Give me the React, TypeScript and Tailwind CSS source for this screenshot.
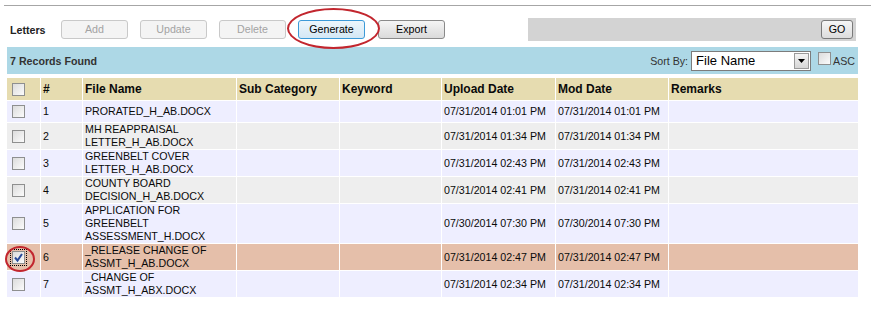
import React from "react";

type Row = {
  n: number;
  name: string[];
  upload: string;
  mod: string;
};

const rows: Row[] = [
  { n: 1, name: ["PRORATED_H_AB.DOCX"], upload: "07/31/2014 01:01 PM", mod: "07/31/2014 01:01 PM" },
  { n: 2, name: ["MH REAPPRAISAL", "LETTER_H_AB.DOCX"], upload: "07/31/2014 01:34 PM", mod: "07/31/2014 01:34 PM" },
  { n: 3, name: ["GREENBELT COVER", "LETTER_H_AB.DOCX"], upload: "07/31/2014 02:43 PM", mod: "07/31/2014 02:43 PM" },
  { n: 4, name: ["COUNTY BOARD", "DECISION_H_AB.DOCX"], upload: "07/31/2014 02:41 PM", mod: "07/31/2014 02:41 PM" },
  { n: 5, name: ["APPLICATION FOR", "GREENBELT", "ASSESSMENT_H.DOCX"], upload: "07/30/2014 07:30 PM", mod: "07/30/2014 07:30 PM" },
  { n: 6, name: ["_RELEASE CHANGE OF", "ASSMT_H_AB.DOCX"], upload: "07/31/2014 02:47 PM", mod: "07/31/2014 02:47 PM" },
  { n: 7, name: ["_CHANGE OF", "ASSMT_H_ABX.DOCX"], upload: "07/31/2014 02:34 PM", mod: "07/31/2014 02:34 PM" },
];

const SELECTED = 6;

function Box({ checked = false }: { checked?: boolean }) {
  const box = (
    <span className="relative block h-[13px] w-[13px] border border-[#8e8f8f] bg-gradient-to-br from-[#dcdcdc] to-[#fbfbfb]">
      {checked && (
        <svg viewBox="0 0 11 11" className="absolute left-0 top-0 h-[11px] w-[11px]">
          <path d="M2 5.5 L4.5 8.5 L9 2" fill="none" stroke="#2a4b9b" strokeWidth="2" />
        </svg>
      )}
    </span>
  );
  if (!checked) return box;
  return <span className="block w-fit border border-dotted border-black p-px">{box}</span>;
}

function Btn({ label, kind }: { label: string; kind: "off" | "on" | "focus" }) {
  const cls =
    kind === "off"
      ? "border-[#c9c9c9] bg-[#f4f4f4] text-[#a3a3a3]"
      : kind === "focus"
        ? "border-[#3c9ad8] bg-gradient-to-b from-[#edf6fc] to-[#d4e8f5] text-black"
        : "border-[#8a8a8a] bg-gradient-to-b from-[#f5f5f5] to-[#dadada] text-black";
  return (
    <button
      type="button"
      className={`flex h-[19px] w-[67px] items-center justify-center rounded-[3px] border text-[10.67px] leading-none ${cls}`}
    >
      {label}
    </button>
  );
}

export default function App() {
  const th = "h-[22px] px-[2px] text-left align-middle text-[12px] font-bold";
  const td = "h-[21px] px-[2px] align-middle leading-[13px]";
  return (
    <div
      className="relative h-[312px] w-[871px] overflow-hidden bg-white text-[10.67px] text-[#0a0a0a]"
      style={{ fontFamily: '"Liberation Sans", Arial, sans-serif' }}
    >
      <div className="ml-[4px] mt-[5px] h-px bg-[#a6a6a6]" />

      {/* toolbar */}
      <div className="mt-[12px] flex h-[23px] items-center pl-[10px]">
        <span className="w-[51px] font-bold text-[#222]">Letters</span>
        <div className="flex gap-[12px]">
          <Btn label="Add" kind="off" />
          <Btn label="Update" kind="off" />
          <Btn label="Delete" kind="off" />
          <Btn label="Generate" kind="focus" />
          <span className="ml-px">
            <Btn label="Export" kind="on" />
          </span>
        </div>
        <div className="ml-[83px] flex h-[23px] w-[328px] items-center justify-end bg-[#d3d3d3] pr-[3px]">
          <button
            type="button"
            className="flex h-[19px] w-[32px] items-center justify-center rounded-[3px] border border-[#7a7a7a] bg-gradient-to-b from-[#f6f6f6] to-[#dcdcdc] text-[10.67px] leading-none text-black"
          >
            GO
          </button>
        </div>
      </div>

      {/* records bar */}
      <div className="ml-[7px] mt-[6px] flex h-[27px] w-[851px] items-center bg-[#add8e6] pl-[3px] pr-[3px]">
        <span className="font-bold text-[#333]">7 Records Found</span>
        <span className="ml-auto text-[#333]">Sort By:</span>
        <div className="ml-[3px] flex h-[20px] w-[120px] items-center border border-[#7c7c7c] bg-white">
          <span className="flex-1 pl-[4px] text-[13px] leading-none text-black">File Name</span>
          <span className="mr-px flex h-[16px] w-[15px] items-center justify-center border border-[#9a9a9a] bg-gradient-to-b from-[#f4f4f4] to-[#d6d6d6]">
            <svg viewBox="0 0 7 4" className="h-[4px] w-[7px]">
              <path d="M0 0 H7 L3.5 4 Z" fill="#000" />
            </svg>
          </span>
        </div>
        <span className="ml-[7px] -mt-[4px]">
          <Box />
        </span>
        <span className="ml-[2px] text-[#333]">ASC</span>
      </div>

      {/* grid */}
      <table className="ml-[6px] mt-[3px] w-[853px] table-fixed border-separate [border-spacing:1px]">
        <colgroup>
          <col className="w-[33px]" />
          <col className="w-[41px]" />
          <col className="w-[153px]" />
          <col className="w-[102px]" />
          <col className="w-[101px]" />
          <col className="w-[113px]" />
          <col className="w-[112px]" />
          <col />
        </colgroup>
        <thead>
          <tr className="bg-[#e6dcb0]">
            <th className="h-[22px] pl-[5px] align-middle">
              <Box />
            </th>
            <th className={th}>#</th>
            <th className={th}>File Name</th>
            <th className={th}>Sub Category</th>
            <th className={th}>Keyword</th>
            <th className={th}>Upload Date</th>
            <th className={th}>Mod Date</th>
            <th className={th}>Remarks</th>
          </tr>
        </thead>
        <tbody>
          {rows.map((r) => {
            const sel = r.n === SELECTED;
            const bg = sel ? "bg-[#e5bfaa]" : r.n % 2 === 1 ? "bg-[#eeeeff]" : "bg-[#eeeeee]";
            return (
              <tr key={r.n} className={bg}>
                <td className={`h-[21px] align-middle ${sel ? "pl-[3px]" : "pl-[5px]"}`}>
                  <Box checked={sel} />
                </td>
                <td className={td}>{r.n}</td>
                <td className={td}>
                  {r.name.map((l) => (
                    <div key={l}>{l}</div>
                  ))}
                </td>
                <td className={td} />
                <td className={td} />
                <td className={td}>{r.upload}</td>
                <td className={td}>{r.mod}</td>
                <td className={td} />
              </tr>
            );
          })}
        </tbody>
      </table>

      {/* annotation marks */}
      <div className="absolute left-[287px] top-[8px] h-[41px] w-[93px] rounded-[50%] border-2 border-[#c2262e]" />
      <div className="absolute left-[5px] top-[246px] h-[26px] w-[30px] rounded-[50%] border-2 border-[#c2262e]" />
    </div>
  );
}
